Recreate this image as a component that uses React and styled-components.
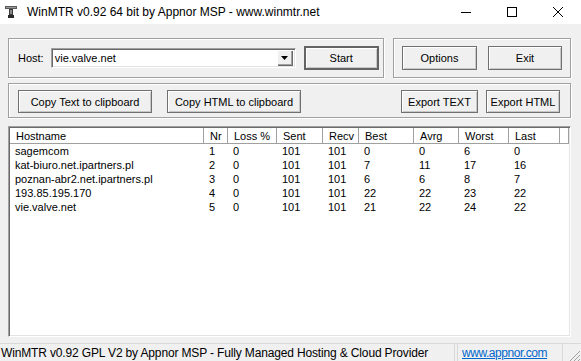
import React from "react";
import styled, { createGlobalStyle } from "styled-components";

const COLUMNS = [
  { label: "Hostname", width: 194 },
  { label: "Nr", width: 24 },
  { label: "Loss %", width: 49 },
  { label: "Sent", width: 46 },
  { label: "Recv", width: 36 },
  { label: "Best", width: 55 },
  { label: "Avrg", width: 45 },
  { label: "Worst", width: 50 },
  { label: "Last", width: 51 },
];

const HOPS = [
  ["sagemcom", 1, 0, 101, 101, 0, 0, 6, 0],
  ["kat-biuro.net.ipartners.pl", 2, 0, 101, 101, 7, 11, 17, 16],
  ["poznan-abr2.net.ipartners.pl", 3, 0, 101, 101, 6, 6, 8, 7],
  ["193.85.195.170", 4, 0, 101, 101, 22, 22, 23, 22],
  ["vie.valve.net", 5, 0, 101, 101, 21, 22, 24, 22],
];

const gridCols = COLUMNS.map(c => `${c.width}px`).join(" ") + " 1fr";

const GlobalStyle = createGlobalStyle`
  html, body {
    margin: 0;
    padding: 0;
  }
  body {
    width: 581px;
    height: 361px;
    overflow: hidden;
    background: #f0f0f0;
    font-family: "Liberation Sans", Arial, sans-serif;
    color: #000;
  }
`;

const Window = styled.div`
  width: 581px;
  height: 361px;
  display: flex;
  flex-direction: column;
  background: #f0f0f0;
  overflow: hidden;
`;

const TitleBar = styled.div`
  height: 24px;
  flex-shrink: 0;
  background: #fff;
  display: flex;
  align-items: center;
`;

const AppIcon = styled.div`
  width: 12px;
  height: 12px;
  margin: 0 10px 0 5px;
  display: flex;
`;

const Title = styled.div`
  flex: 1;
  font-size: 12px;
  white-space: nowrap;
`;

const Control = styled.div`
  width: 46px;
  height: 24px;
  display: flex;
  align-items: center;
  justify-content: center;
`;

const Content = styled.div`
  flex: 1;
  min-height: 0;
  display: flex;
  flex-direction: column;
  padding: 14px 10px 0 8px;
  font-size: 11px;
`;

const TopRow = styled.div`
  display: flex;
  gap: 9px;
  flex-shrink: 0;
`;

const GroupBox = styled.div`
  height: ${({ h }) => h}px;
  width: ${({ w }) => (w ? `${w}px` : "auto")};
  flex: ${({ grow }) => (grow ? "1 0 0" : "0 0 auto")};
  box-sizing: border-box;
  border: 1px solid #a0a0a0;
  box-shadow: inset 1px 1px 0 #fff, 1px 1px 0 #fff;
  display: flex;
  align-items: center;
  padding: ${({ pad }) => pad};
  margin-top: ${({ mt }) => mt || 0}px;
`;

const Label = styled.span`
  margin-right: 7px;
`;

const Combo = styled.div`
  width: 245px;
  height: 20px;
  box-sizing: border-box;
  background: #fff;
  border-top: 1px solid #a0a0a0;
  border-left: 1px solid #a0a0a0;
  border-right: 1px solid #fff;
  border-bottom: 1px solid #fff;
  box-shadow: inset 1px 1px 0 #696969, inset -1px -1px 0 #e3e3e3;
  display: flex;
  align-items: center;
  padding: 2px 2px 2px 3px;
  margin-right: 8px;
`;

const ComboText = styled.span`
  flex: 1;
`;

const DropButton = styled.div`
  width: 16px;
  height: 16px;
  box-sizing: border-box;
  background: #f0f0f0;
  box-shadow: inset 1px 1px 0 #fff, inset -1px -1px 0 #696969,
    inset -2px -2px 0 #a0a0a0;
  display: flex;
  align-items: center;
  justify-content: center;
`;

const Button = styled.div`
  width: ${({ w }) => w}px;
  height: ${({ h }) => h || 24}px;
  flex-shrink: 0;
  box-sizing: border-box;
  background: #f0f0f0;
  border: ${({ primary }) => (primary ? "2px solid #646464" : "1px solid #707070")};
  box-shadow: inset 1px 1px 0 #fff, inset -1px -1px 0 #c8c8c8;
  display: flex;
  align-items: center;
  justify-content: center;
  white-space: nowrap;
  margin-right: ${({ mr }) => mr || 0}px;
`;

const Spacer = styled.div`
  flex: 1;
`;

const ListView = styled.div`
  margin-top: 8px;
  height: 211px;
  flex-shrink: 0;
  box-sizing: border-box;
  background: #fff;
  border-top: 1px solid #a0a0a0;
  border-left: 1px solid #a0a0a0;
  border-right: 1px solid #fff;
  border-bottom: 1px solid #fff;
  box-shadow: inset 1px 1px 0 #696969, inset -1px -1px 0 #e3e3e3;
  padding: 1px;
`;

const HeaderRow = styled.div`
  display: grid;
  grid-template-columns: ${gridCols};
  height: 16px;
  box-sizing: border-box;
  border-bottom: 1px solid #a0a0a0;
  background: #fff;
`;

const HeaderCell = styled.div`
  border-right: 1px solid #a0a0a0;
  padding-left: 6px;
  line-height: 16px;
  white-space: nowrap;
  overflow: hidden;
`;

const DataRow = styled.div`
  display: grid;
  grid-template-columns: ${gridCols};
  height: 14px;
  line-height: 14px;
`;

const DataCell = styled.div`
  padding-left: 5px;
  white-space: nowrap;
  overflow: hidden;
`;

const StatusBar = styled.div`
  margin: 6px -10px 0 -8px;
  flex-shrink: 0;
  display: flex;
  font-size: 12px;
  letter-spacing: -0.15px;
  border-top: 1px solid #d9d9d9;
  height: 24px;
`;

const StatusPanel = styled.div`
  width: ${({ w }) => w}px;
  box-sizing: border-box;
  border-right: 1px solid #d9d9d9;
  border-left: ${({ first }) => (first ? "none" : "1px solid #d9d9d9")};
  margin-right: ${({ mr }) => mr || 0}px;
  padding: 2px 0 0 ${({ pl }) => pl}px;
  white-space: nowrap;
  overflow: hidden;
`;

const Link = styled.span`
  color: #0066cc;
  text-decoration: underline;
  letter-spacing: -0.45px;
`;

const Grip = styled.div`
  flex: 1;
  display: flex;
  justify-content: flex-end;
  align-items: flex-start;
  padding-top: 4px;
`;

export default function App() {
  return (
    <>
      <GlobalStyle />
      <Window>
        <TitleBar>
          <AppIcon>
            <svg width="12" height="12" viewBox="0 0 12 12">
              <rect x="0" y="0" width="12" height="3" fill="#5a5a5a" />
              <rect x="1" y="1" width="10" height="1" fill="#9a9a9a" />
              <rect x="4" y="3" width="4" height="6" fill="#3a3a3a" />
              <rect x="5" y="4" width="2" height="4" fill="#8a8a8a" />
              <rect x="3" y="9" width="6" height="3" fill="#2a2a2a" />
            </svg>
          </AppIcon>
          <Title>WinMTR v0.92 64 bit by Appnor MSP - www.winmtr.net</Title>
          <Control>
            <svg width="10" height="10" viewBox="0 0 10 10">
              <line x1="0" y1="5.5" x2="10" y2="5.5" stroke="#000" strokeWidth="1" />
            </svg>
          </Control>
          <Control>
            <svg width="10" height="10" viewBox="0 0 10 10">
              <rect x="0.5" y="0.5" width="9" height="9" fill="none" stroke="#000" strokeWidth="1" />
            </svg>
          </Control>
          <Control>
            <svg width="10" height="10" viewBox="0 0 10 10">
              <path d="M0 0 L10 10 M10 0 L0 10" stroke="#000" strokeWidth="1" />
            </svg>
          </Control>
        </TitleBar>

        <Content>
          <TopRow>
            <GroupBox h={40} w={376} pad="0 0 0 9px">
              <Label>Host:</Label>
              <Combo>
                <ComboText>vie.valve.net</ComboText>
                <DropButton>
                  <svg width="7" height="4" viewBox="0 0 7 4">
                    <path d="M0 0 H7 L3.5 4 Z" fill="#000" />
                  </svg>
                </DropButton>
              </Combo>
              <Button w={75} primary>Start</Button>
            </GroupBox>
            <GroupBox h={40} grow pad="0 0 0 8px">
              <Button w={75} mr={11}>Options</Button>
              <Button w={74}>Exit</Button>
            </GroupBox>
          </TopRow>

          <GroupBox h={35} mt={5} pad="2px 10px 0 9px">
            <Button w={134} h={23} mr={15}>Copy Text to clipboard</Button>
            <Button w={134} h={23}>Copy HTML to clipboard</Button>
            <Spacer />
            <Button w={77} h={23} mr={8}>Export TEXT</Button>
            <Button w={74} h={23}>Export HTML</Button>
          </GroupBox>

          <ListView>
            <HeaderRow>
              {COLUMNS.map(c => (
                <HeaderCell key={c.label}>{c.label}</HeaderCell>
              ))}
              <HeaderCell />
            </HeaderRow>
            {HOPS.map(hop => (
              <DataRow key={hop[1]}>
                {hop.map((v, i) => (
                  <DataCell key={i}>{v}</DataCell>
                ))}
              </DataRow>
            ))}
          </ListView>

          <StatusBar>
            <StatusPanel first w={455} mr={2} pl={1}>
              WinMTR v0.92 GPL V2 by Appnor MSP - Fully Managed Hosting &amp; Cloud Provider
            </StatusPanel>
            <StatusPanel w={106} pl={4}>
              <Link>www.appnor.com</Link>
            </StatusPanel>
            <Grip>
              <svg width="12" height="14" viewBox="0 0 12 14">
                <path d="M11 3 L0 14 M11 7 L4 14 M11 11 L8 14" stroke="#a0a0a0" strokeWidth="1" />
              </svg>
            </Grip>
          </StatusBar>
        </Content>
      </Window>
    </>
  );
}
